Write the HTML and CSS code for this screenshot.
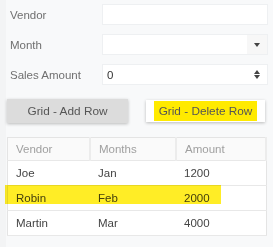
FILE: index.html
```html
<!DOCTYPE html>
<html lang="en">
<head>
    <meta charset="UTF-8">
    <title>Sales Grid</title>
    <link rel="stylesheet" href="styles.css">
</head>
<body>
    <div class="panel">
        <form class="sales-form">
            <div class="field">
                <label for="vendor">Vendor</label>
                <input type="text" id="vendor" class="box">
            </div>
            <div class="field">
                <label for="month">Month</label>
                <div class="box combo">
                    <span class="combo-value"></span>
                    <span class="combo-btn"><span class="caret-down"></span></span>
                </div>
            </div>
            <div class="field">
                <label for="amount">Sales Amount</label>
                <div class="box combo">
                    <span class="combo-value">0</span>
                    <span class="spin"><span class="caret-up"></span><span class="caret-down"></span></span>
                </div>
            </div>
        </form>

        <div class="actions">
            <button type="button" class="btn btn-add">Grid - Add Row</button>
            <button type="button" class="btn btn-delete"><span class="mark">Grid - Delete Row</span></button>
        </div>

        <table class="grid">
            <thead>
                <tr><th>Vendor</th><th>Months</th><th>Amount</th></tr>
            </thead>
            <tbody>
                <tr><td>Joe</td><td>Jan</td><td>1200</td></tr>
                <tr><td>Robin</td><td>Feb</td><td>2000</td></tr>
                <tr><td>Martin</td><td>Mar</td><td>4000</td></tr>
            </tbody>
        </table>

        <div class="row-mark"></div>
    </div>
</body>
</html>
```

FILE: styles.css
```css
body {
    margin: 0;
    height: 247px;
    background-color: #f3f4f5;
    font-family: "Liberation Sans", Arial, sans-serif;
    font-size: 11.5px;
    overflow: hidden;
}

.panel {
    position: relative;
    margin-left: 6px;
    height: 247px;
    padding: 4px 5px 0 1px;
    box-sizing: border-box;
    background-color: #f8f9fa;
}

.sales-form {
    display: flex;
    flex-direction: column;
    gap: 9px;
    padding-left: 3px;
}

.field {
    display: flex;
    align-items: center;
}

.field label {
    width: 92px;
    color: #707070;
}

.box {
    width: 166px;
    height: 21px;
    box-sizing: border-box;
    border: 1px solid #eef0f2;
    background-color: #fff;
    margin: 0;
    padding: 0;
    font: inherit;
}

.combo {
    display: flex;
    align-items: center;
}

.combo-value {
    flex: 1;
    padding-left: 4px;
    color: #333;
}

.combo-btn {
    width: 20px;
    height: 100%;
    display: flex;
    align-items: center;
    justify-content: center;
    background-color: #f7f7f7;
}

.spin {
    width: 20px;
    display: flex;
    flex-direction: column;
    align-items: center;
    gap: 1px;
}

.caret-down, .caret-up {
    width: 0;
    height: 0;
    border-left: 3.5px solid transparent;
    border-right: 3.5px solid transparent;
}

.caret-down {
    border-top: 4px solid #444;
}

.caret-up {
    border-bottom: 4px solid #444;
}

.actions {
    display: flex;
    align-items: center;
    gap: 18px;
    margin-top: 14px;
}

.btn {
    height: 24px;
    border: none;
    padding: 0;
    font: inherit;
    font-size: 11.8px;
    color: #555;
    box-shadow: 0 1px 3px rgba(0, 0, 0, 0.25);
}

.btn-add {
    width: 121px;
    background-color: #dcdcdc;
}

.btn-delete {
    width: 119px;
    height: 22px;
    background-color: #fff;
}

.mark {
    display: inline-block;
    padding: 3px 5px;
    background-color: #ffea00;
    color: #555;
}

.grid {
    width: 260px;
    margin-top: 14px;
    border-collapse: collapse;
    border: 1px solid #e4e4e4;
    background-color: #fff;
}

.grid th, .grid td {
    text-align: left;
    padding: 0 0 0 8px;
    font-weight: normal;
}

.grid th {
    height: 22px;
    color: #a0a0a0;
    background-color: #fafafa;
    border-right: 2px solid #ececec;
    border-bottom: 1px solid #e8e8e8;
}

.grid th:first-child {
    width: 73px;
}

.grid th:nth-child(2) {
    width: 76px;
}

.grid td {
    height: 24px;
    color: #444;
    border-bottom: 1px solid #e8e8e8;
}

.row-mark {
    position: absolute;
    left: -1px;
    top: 185px;
    width: 216px;
    height: 19px;
    background-color: rgba(255, 234, 0, 0.85);
    mix-blend-mode: multiply;
}
```
